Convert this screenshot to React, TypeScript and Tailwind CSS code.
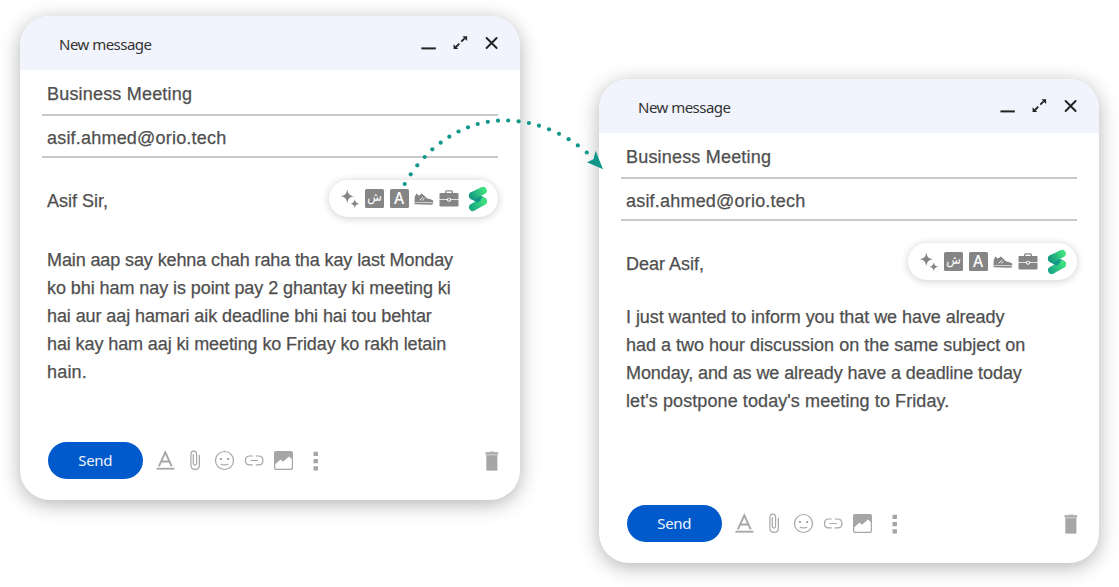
import type { ReactNode } from "react";

const BODY_FONT = "font-['Liberation_Sans',Arial,sans-serif] text-[#4f4f4f] [-webkit-text-stroke:0.25px_#4f4f4f]";
const UI_FONT = "font-['Noto_Sans','Open_Sans',sans-serif]";

type Line = { text: string; className: string };

type MessageProps = {
  id: string;
  greeting: string;
  bodyClass: string;
  lines: Line[];
};

function WindowControls() {
  return (
    <svg className="h-[18px] w-[80px] shrink-0" viewBox="420 34 80 18" fill="none">
      <path d="M421.4 48.4h14.400" stroke="#222" strokeWidth="2" />
      <path d="M456 47l3.300-3.300M461.300 41.700l3.300-3.300" stroke="#222" strokeWidth="1.800" />
      <path d="M462.500 36.300h4.600v4.600zM453.600 44.300v4.600h4.600z" fill="#222" />
      <path d="M486.600 38l10 10M496.600 38l-10 10" stroke="#222" strokeWidth="1.900" strokeLinecap="round" />
    </svg>
  );
}

function LetterBox({ children, className }: { children: ReactNode; className: string }) {
  return (
    <span className={`flex h-[19px] w-[19px] shrink-0 items-center justify-center rounded-[1.5px] bg-[#858585] text-white ${className}`}>
      {children}
    </span>
  );
}

function ToneBar({ id }: { id: string }) {
  return (
    <div className="flex h-[37px] w-[169px] items-center rounded-full bg-white pl-3 shadow-[0_1px_8px_rgba(0,0,0,0.2)]">
      <svg className="mr-[5px] h-[19px] w-[19px] shrink-0 overflow-visible" viewBox="0 0 19 19" fill="#858585">
        <path d="M6.300.5c.9 4.600 2.200 5.900 6.800 6.800-4.600.9-5.900 2.200-6.800 6.800C5.400 9.500 4.100 8.200-.5 7.300 4.100 6.400 5.400 5.100 6.300.5z" />
        <path d="M13.800 10.300c.6 3 1.500 3.800 4.500 4.400-3 .6-3.900 1.500-4.500 4.500-.6-3-1.500-3.900-4.500-4.500 3-.6 3.900-1.400 4.500-4.400z" />
      </svg>
      <LetterBox className="mr-[5.500px] font-['DejaVu_Sans',sans-serif] text-[12px]">
        <span className="-mt-[3px] leading-[19px]">ش</span>
      </LetterBox>
      <LetterBox className="font-['Noto_Sans',sans-serif] text-[15.500px] font-medium">
        <span className="leading-[19px]">A</span>
      </LetterBox>
      <svg className="ml-[5px] h-[12px] w-[20px] shrink-0" viewBox="0 0 20 12">
        <path d="M.8 3.500L2.800.3l1.500 2.300 2.200-.9.800-1.200 1.200.5 4.400 4.300 5 1.500c1.300.5 1.500 1.200 1.400 2.600L.5 8.900z" fill="#858585" />
        <path d="M.5 9.500l18.800.7c-.4 1.200-1.200 1.500-2.400 1.500L1.200 11.300c-.6 0-.7-.9-.7-1.800z" fill="#858585" />
        <path d="M5.700 7.300l3.200-3.100M8.200 7.500l2.300-2.200" stroke="#fff" strokeWidth="0.900" />
      </svg>
      <svg className="ml-[5px] h-[17px] w-[20px] shrink-0" viewBox="0 0 20 17">
        <path d="M6.700 3.500V1.800c0-.6.3-.9.9-.9h4.800c.6 0 .9.300.9.900v1.700" fill="none" stroke="#858585" strokeWidth="1.300" />
        <path d="M1.700 2.900h16.600c.8 0 1.200.5 1.200 1.200v5.200h-7.300a2.300 2.300 0 0 0-4.400 0H.5V4.100c0-.7.4-1.200 1.200-1.200zM.5 10.100h7.300a2.300 2.300 0 0 0 4.400 0h7.300v5.300c0 .7-.4 1.100-1.200 1.100H1.700c-.8 0-1.200-.4-1.200-1.100z" fill="#858585" />
        <circle cx="10" cy="9.700" r="1.100" fill="#858585" />
      </svg>
      <svg className="ml-[9.500px] h-[26px] w-[20px] shrink-0" viewBox="0 0 20 26" strokeWidth="7.600" strokeLinecap="round">
        <defs>
          <linearGradient id={`${id}-top`} gradientUnits="userSpaceOnUse" x1="2" y1="10" x2="17" y2="2">
            <stop offset="0.050" stopColor="#169b80" />
            <stop offset="0.900" stopColor="#3ee07f" />
          </linearGradient>
          <linearGradient id={`${id}-mid`} gradientUnits="userSpaceOnUse" x1="2" y1="8" x2="18" y2="18">
            <stop offset="0.200" stopColor="#12978a" />
            <stop offset="0.900" stopColor="#23b585" />
          </linearGradient>
          <linearGradient id={`${id}-low`} gradientUnits="userSpaceOnUse" x1="2" y1="22" x2="18" y2="14">
            <stop offset="0.100" stopColor="#1cab86" />
            <stop offset="0.900" stopColor="#3ee07f" />
          </linearGradient>
        </defs>
        <path d="M4.800 9.700L15 15.200" stroke={`url(#${id}-mid)`} />
        <path d="M4.800 21.300L15 15.500" stroke={`url(#${id}-low)`} />
        <path d="M4.500 9.600L9.500 13" stroke="#12978a" strokeWidth="6.500" />
        <path d="M4.800 9.700L15 4.700" stroke={`url(#${id}-top)`} />
      </svg>
    </div>
  );
}

function FormatIcons() {
  return (
    <svg className="ml-[11px] h-[24px] w-[168px] shrink-0" viewBox="154 449 168 24" fill="none" stroke="#a6a6a6">
      <path d="M158.900 466.300l6.400-14 6.400 14M161.200 461.500h8.200" strokeWidth="1.900" />
      <path d="M156.500 468.700h18" strokeWidth="1.800" />
      <path d="M193.300 454.700v8.500c0 2.500 3.300 2.500 3.300 0v-8.900c0-4.300-5.700-4.300-5.700 0v10.900c0 5.600 8.500 5.600 8.500 0v-9.900" strokeWidth="1.200" strokeLinecap="round" />
      <circle cx="224.500" cy="460.500" r="9" strokeWidth="1.200" />
      <path d="M220.800 464c1.700 1.300 5.700 1.300 7.400 0" strokeWidth="1.200" />
      <path d="M219.900 459h2M227.100 459h2" strokeWidth="1.800" />
      <path d="M252.700 456h-3c-5.600 0-5.600 8.900 0 8.900h3M255.700 456h3c5.600 0 5.600 8.900 0 8.900h-3M250.600 460.500h7.200" strokeWidth="1.200" />
      <rect x="274" y="451" width="19" height="19" rx="2" fill="#a6a6a6" stroke="none" />
      <path d="M275.300 467.500v-3.300l5.300-4.700 2.400 2.300 6-5.300 2.800 2.500v8.500c0 .8-.4 1.200-1.200 1.200h-14c-.8 0-1.300-.4-1.300-1.200z" fill="#fff" stroke="none" />
      <path d="M313.500 451.800h4.500v4.200h-4.500zM313.500 459h4.500v4.300h-4.500zM313.500 466.200h4.500v4.200h-4.500z" fill="#a6a6a6" stroke="none" />
    </svg>
  );
}

function Trash() {
  return (
    <svg className="h-[20px] w-[14px] shrink-0" viewBox="0 0 14 20">
      <path d="M4.500.4h4.800v1H4.500z" fill="#bbb" />
      <path d="M.5 1.200h12.600v2.300H.5z" fill="#a8a8a8" />
      <path d="M1.300 3.500h11.100v16.100H1.300z" fill="#a6a6a6" />
      <path d="M1.300 3.900h11.100" stroke="#cfcfcf" strokeWidth="0.800" />
    </svg>
  );
}

function MessageWindow({ id, greeting, bodyClass, lines }: MessageProps) {
  return (
    <section className="flex h-[484px] w-[500px] shrink-0 flex-col rounded-[30px] bg-white shadow-[0_4px_20px_rgba(0,0,0,0.3)]">
      <header className="flex h-[53.500px] shrink-0 items-center justify-between rounded-t-[30px] bg-[#f1f4fd] pr-5 pl-[39px]">
        <h2 className={`${UI_FONT} pt-[3px] text-[15px] leading-5 tracking-[-0.520px] text-[#333]`}>New message</h2>
        <WindowControls />
      </header>
      <div className="mx-[22px] flex h-[46px] shrink-0 items-center border-b-2 border-[#c9c9c9] pl-[5px]">
        <span className={`${BODY_FONT} pt-[4px] text-[18px] leading-6 tracking-[0.190px]`}>Business Meeting</span>
      </div>
      <div className="mx-[22px] flex h-[42px] shrink-0 items-center border-b-2 border-[#c9c9c9] pl-[5px]">
        <span className={`${BODY_FONT} pt-[4px] text-[18px] leading-6 tracking-[0.200px]`}>asif.ahmed@orio.tech</span>
      </div>
      <div className="mt-[22.500px] flex h-[37px] shrink-0 items-center justify-between pr-[22px] pl-[27px]">
        <span className={`${BODY_FONT} pt-[5px] text-[18px] leading-6`}>{greeting}</span>
        <ToneBar id={id} />
      </div>
      <div className={`${BODY_FONT} pl-[27px] text-[18px] leading-7 whitespace-nowrap ${bodyClass}`}>
        {lines.map((line) => (
          <p key={line.text} className={line.className}>
            {line.text}
          </p>
        ))}
      </div>
      <footer className="mt-auto mb-[21px] flex h-[37px] shrink-0 items-center pr-[21.500px] pl-[28px]">
        <button className={`${UI_FONT} h-[37px] w-[94.500px] rounded-full bg-[#005acb] text-[15px] tracking-[-0.300px] text-[#eef3fc]`}>Send</button>
        <FormatIcons />
        <span className="ml-auto flex">
          <Trash />
        </span>
      </footer>
    </section>
  );
}

const dots: [number, number][] = [
  [404.7, 184], [410.7, 174.3], [417.3, 165.3], [424.7, 157], [432.3, 149.3], [440.7, 142.7],
  [449.3, 136.7], [458.5, 131.5], [468, 127.3], [477.7, 124], [487.8, 121.8], [498, 120.7],
  [508.2, 120.5], [518.6, 121.3], [528.9, 123], [539, 125.7], [549, 129.3], [559, 133.8],
  [568.6, 139.2], [577.8, 145.4], [586.8, 152.5],
];

export default function App() {
  return (
    <main className="relative flex h-[587px] w-[1119px] items-start gap-[79px] overflow-hidden bg-white pt-4 pl-5">
      <MessageWindow
        id="draft"
        greeting="Asif Sir,"
        bodyClass="mt-[29px]"
        lines={[
          { text: "Main aap say kehna chah raha tha kay last Monday", className: "tracking-[-0.110px]" },
          { text: "ko bhi ham nay is point pay 2 ghantay ki meeting ki", className: "tracking-[-0.070px]" },
          { text: "hai aur aaj hamari aik deadline bhi hai tou behtar", className: "tracking-[-0.090px]" },
          { text: "hai kay ham aaj ki meeting ko Friday ko rakh letain", className: "tracking-[-0.100px]" },
          { text: "hain.", className: "tracking-[0.200px]" },
        ]}
      />
      <div className="mt-[63px]">
        <MessageWindow
          id="result"
          greeting="Dear Asif,"
          bodyClass="mt-[23px]"
          lines={[
            { text: "I just wanted to inform you that we have already", className: "tracking-[-0.060px]" },
            { text: "had a two hour discussion on the same subject on", className: "" },
            { text: "Monday, and as we already have a deadline today", className: "tracking-[-0.090px]" },
            { text: "let's postpone today's meeting to Friday.", className: "tracking-[0.090px]" },
          ]}
        />
      </div>
      <svg className="pointer-events-none absolute top-0 left-0 h-[587px] w-[1119px]" viewBox="0 0 1119 587" fill="#109789">
        {dots.map(([x, y]) => (
          <circle key={x} cx={x} cy={y} r="2.1" />
        ))}
        <path d="M595.600 150.700l7.400 18.500-16-7 6.500-2.900z" />
      </svg>
    </main>
  );
}
